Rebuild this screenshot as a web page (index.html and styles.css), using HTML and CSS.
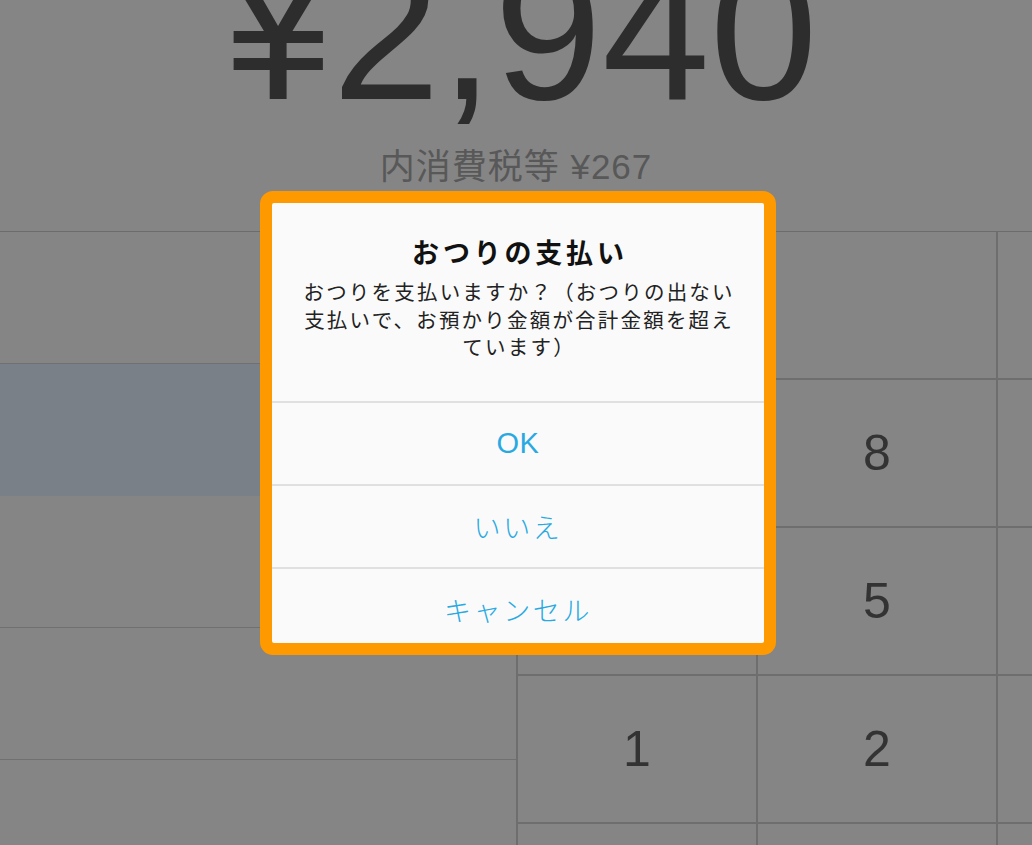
FILE: index.html
```html
<!DOCTYPE html>
<html lang="ja">
<head>
<meta charset="utf-8">
<title>おつりの支払い</title>
<link rel="stylesheet" href="styles.css">
</head>
<body>
<div class="screen">
  <header class="summary">
    <div class="amount">¥2,940</div>
    <div class="tax">内消費税等 ¥267</div>
  </header>
  <main class="main">
    <section class="list">
      <div class="row"></div>
      <div class="row selected"></div>
      <div class="row"></div>
      <div class="row"></div>
      <div class="row"></div>
    </section>
    <section class="keypad">
      <div class="key"></div><div class="key"></div><div class="key"></div>
      <div class="key">7</div><div class="key">8</div><div class="key"></div>
      <div class="key">4</div><div class="key">5</div><div class="key"></div>
      <div class="key">1</div><div class="key">2</div><div class="key"></div>
      <div class="key"></div><div class="key"></div><div class="key"></div>
    </section>
  </main>
  <div class="dialog">
    <div class="alert">
      <div class="alert-body">
        <div class="alert-title">おつりの支払い</div>
        <div class="alert-msg">おつりを支払いますか？（おつりの出ない<br>支払いで、お預かり金額が合計金額を超え<br>ています）</div>
      </div>
      <div class="alert-btn ok">OK</div>
      <div class="alert-btn">いいえ</div>
      <div class="alert-btn">キャンセル</div>
    </div>
  </div>
</div>
</body>
</html>
```

FILE: styles.css
```css
* {
  box-sizing: border-box;
}

html, body {
  margin: 0;
  padding: 0;
  background: #858585;
}

body {
  width: 1032px;
  height: 845px;
  overflow: hidden;
  font-family: "Liberation Sans", "Noto Sans CJK JP", sans-serif;
}

.screen {
  position: relative;
  width: 1032px;
  height: 845px;
  overflow: hidden;
}

.summary {
  height: 232px;
  border-bottom: 1px solid #6c6c6c;
  display: flex;
  flex-direction: column;
  align-items: center;
  overflow: hidden;
}

.amount {
  margin-top: -65px;
  font-size: 194px;
  line-height: 194px;
  color: #2d2d2d;
  white-space: nowrap;
  padding-left: 10px;
}

.tax {
  margin-top: 18px;
  font-size: 35px;
  line-height: 40px;
  color: #585858;
  letter-spacing: 1px;
  white-space: nowrap;
}

.main {
  display: flex;
  height: 613px;
}

.list {
  width: 516px;
  flex: none;
  display: flex;
  flex-direction: column;
}

.row {
  height: 132px;
  flex: none;
  border-bottom: 1px solid #707070;
}

.row.selected {
  background: #7a8088;
  border-bottom: none;
}

.keypad {
  flex: 1;
  background: #6e6e6e;
  padding-left: 2px;
  display: grid;
  grid-template-columns: 238px 238px 238px;
  grid-auto-rows: 146px;
  gap: 2px;
  overflow: hidden;
}

.key {
  background: #858585;
  display: flex;
  align-items: center;
  justify-content: center;
  font-size: 50px;
  color: #333333;
}

.dialog {
  position: absolute;
  left: 260px;
  top: 191px;
  width: 516px;
  height: 464px;
  border: 12px solid #ff9900;
  border-radius: 13px;
  background: #ff9900;
}

.alert {
  width: 100%;
  height: 100%;
  background: #fafafa;
  border-radius: 2px;
  overflow: hidden;
  display: flex;
  flex-direction: column;
  font-family: "Noto Sans CJK JP", sans-serif;
}

.alert-body {
  height: 198px;
  flex: none;
  display: flex;
  flex-direction: column;
  align-items: center;
  padding-top: 32px;
}

.alert-title {
  font-size: 27px;
  line-height: 34px;
  font-weight: 700;
  color: #111111;
  letter-spacing: 3.8px;
  margin-right: -3.8px;
}

.alert-msg {
  margin-top: 9px;
  font-size: 20.5px;
  line-height: 27.5px;
  color: #222222;
  letter-spacing: 2.2px;
  margin-right: -2.2px;
  text-align: center;
  white-space: nowrap;
}

.alert-btn {
  height: 83px;
  flex: none;
  border-top: 2px solid #e0e0e0;
  display: flex;
  align-items: center;
  justify-content: center;
  font-size: 27px;
  font-weight: 300;
  color: #29a9e2;
  letter-spacing: 2.6px;
}

.alert-btn.ok {
  font-family: "Liberation Sans", sans-serif;
  font-size: 29px;
  font-weight: 400;
  letter-spacing: 0.5px;
}
```
